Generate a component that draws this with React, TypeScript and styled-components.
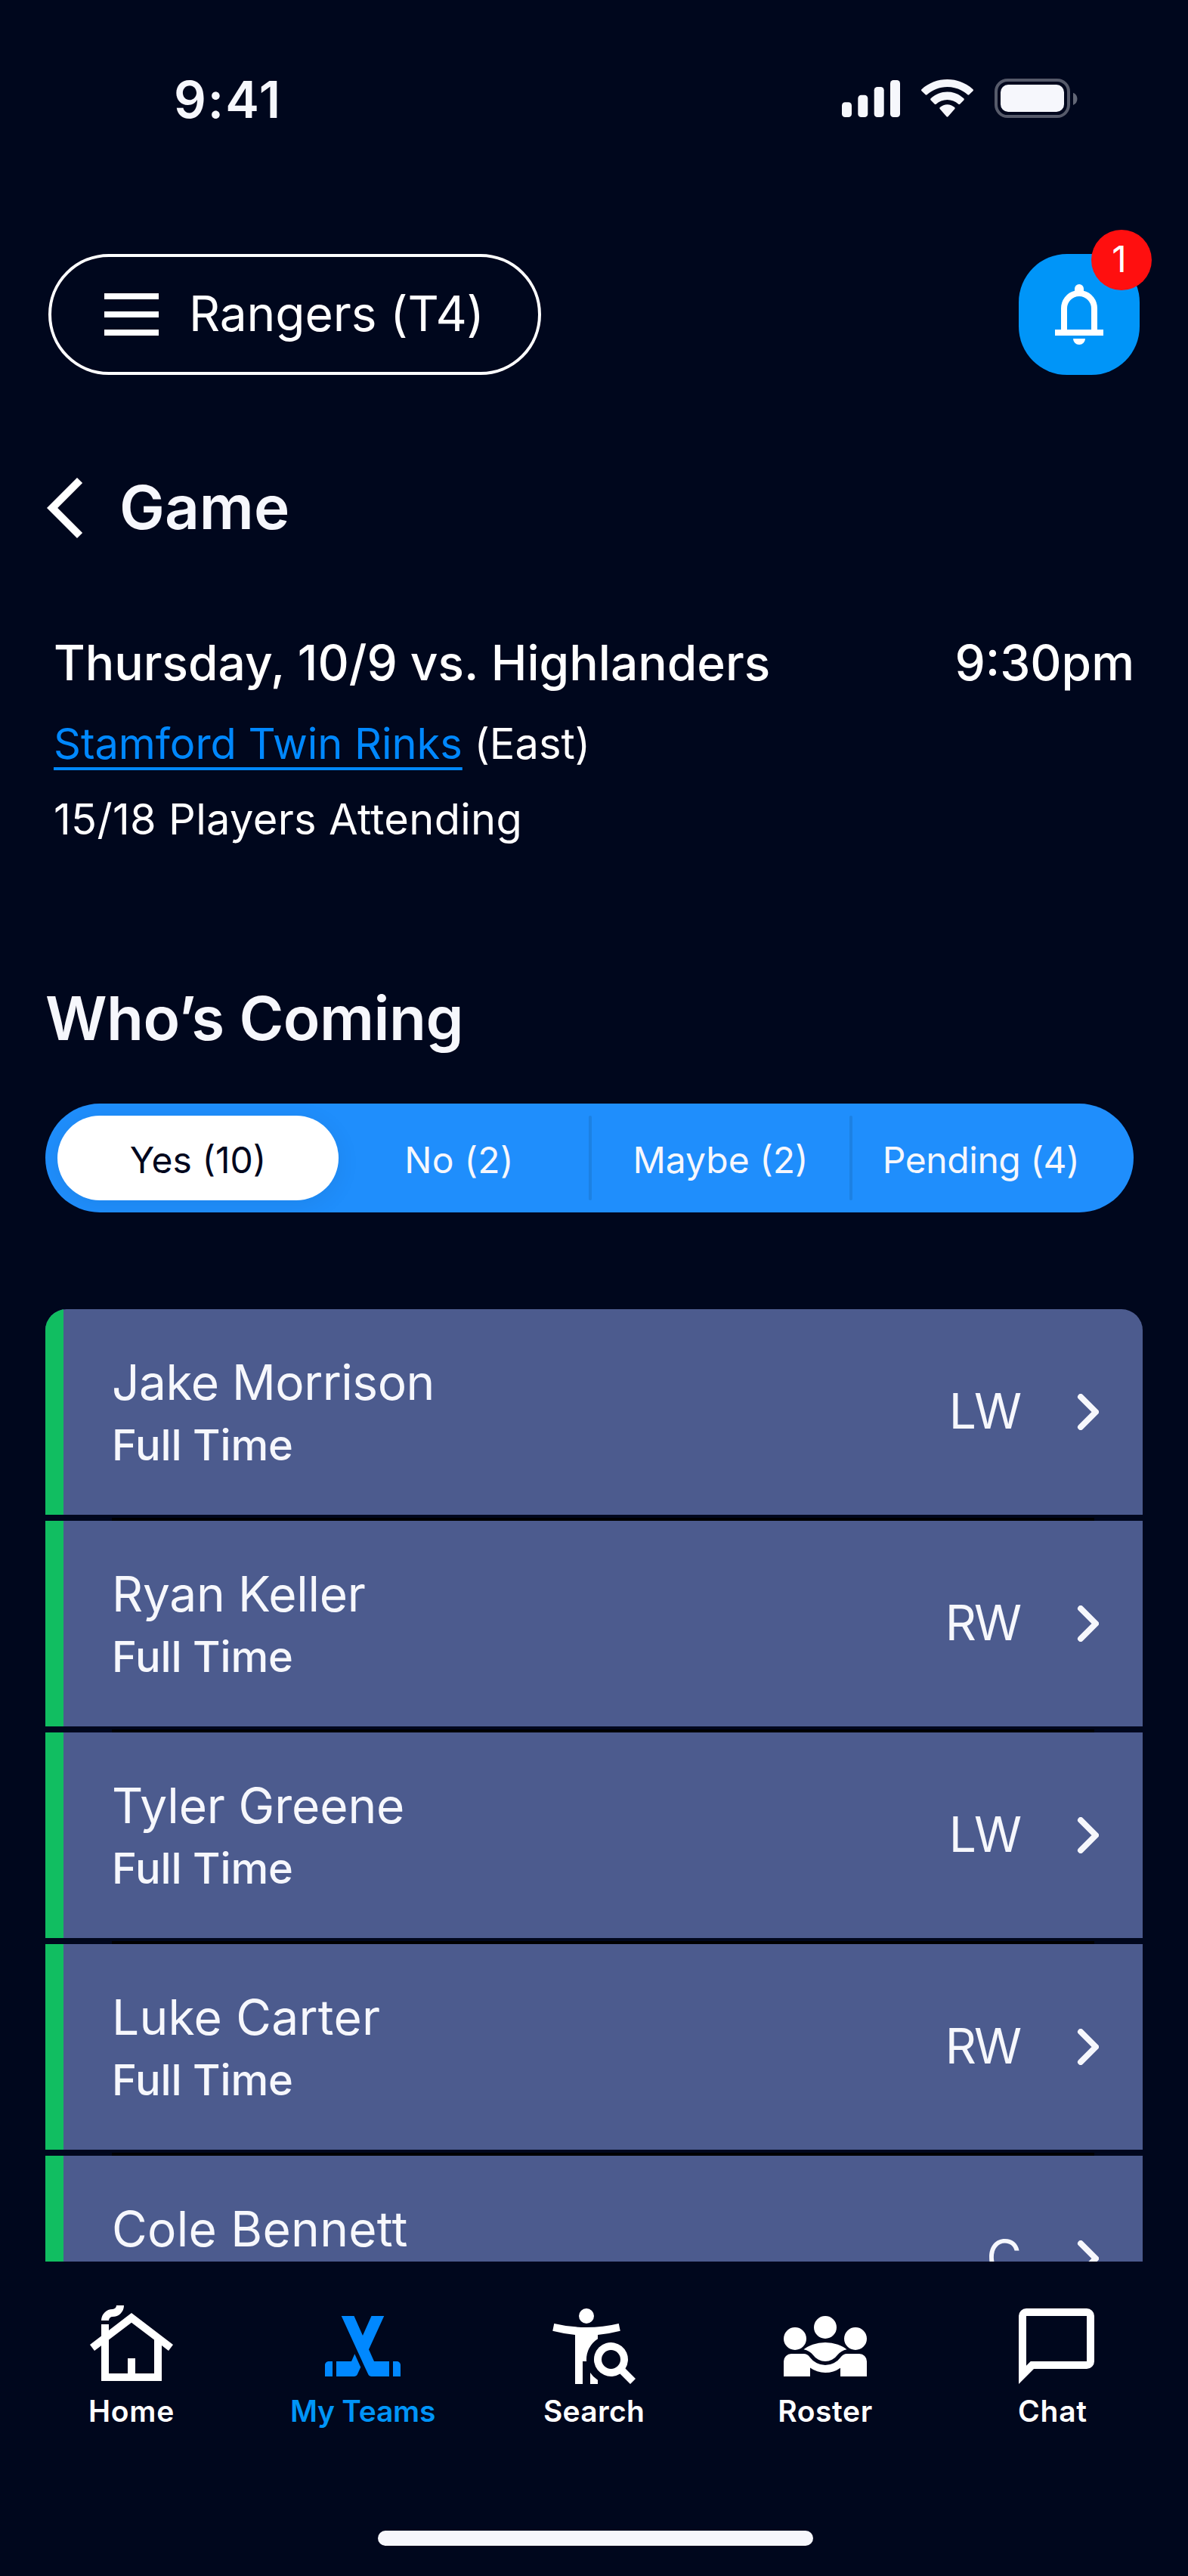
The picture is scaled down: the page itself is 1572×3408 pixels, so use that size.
import React from 'react';
import styled, { createGlobalStyle } from 'styled-components';

const c = {
  bg: '#00071d',
  text: '#f6f7fc',
  white: '#ffffff',
  blue: '#0088ff',
  accent: '#0095f8',
  segment: '#1f8efc',
  row: '#4c5b8e',
  green: '#11be61',
  red: '#ff0f0f',
};

const GlobalStyle = createGlobalStyle`
  *, *::before, *::after { box-sizing: border-box; }
  body {
    margin: 0;
    background: ${c.bg};
    font-family: Inter, 'Liberation Sans', sans-serif;
    color: ${c.white};
  }
  button, a { font: inherit; color: inherit; }
`;

const Screen = styled.main`
  display: flex;
  flex-direction: column;
  width: 1572px;
  height: 3408px;
  overflow: hidden;
  background: ${c.bg};
`;

const StatusBar = styled.div`
  display: flex;
  align-items: center;
  justify-content: space-between;
  height: 264px;
  padding: 0 146px 0 230px;
  color: ${c.text};
`;

const Clock = styled.time`
  font-size: 67px;
  font-weight: 600;
  line-height: 80px;
  letter-spacing: 2px;
`;

const StatusIcons = styled.div`
  display: flex;
  align-items: center;
  height: 52px;
  margin-top: -4px;
  gap: 28px;
`;

const Icon = styled.svg`
  display: block;
  flex: none;
  fill: currentColor;
`;

const TopBar = styled.header`
  display: flex;
  align-items: center;
  justify-content: space-between;
  padding: 72px 64px 0;
`;

const TeamPicker = styled.button`
  display: flex;
  align-items: center;
  gap: 40px;
  width: 652px;
  height: 160px;
  padding: 0 0 0 70px;
  border: 4px solid ${c.white};
  border-radius: 80px;
  background: transparent;
  font-size: 64px;
  font-weight: 400;
  line-height: 80px;
  letter-spacing: -0.1px;
`;

const TeamName = styled.span`
  padding-bottom: 2px;
`;

const Bars = styled.span`
  display: flex;
  flex-direction: column;
  gap: 16px;
  width: 72px;

  i {
    height: 8px;
    background: currentColor;
  }
`;

const BellButton = styled.button`
  position: relative;
  display: flex;
  align-items: center;
  justify-content: center;
  width: 160px;
  height: 160px;
  padding: 0;
  border: 0;
  border-radius: 64px;
  background: ${c.accent};
  color: ${c.white};
`;

const Badge = styled.span`
  position: absolute;
  top: -32px;
  right: -16px;
  width: 80px;
  height: 80px;
  padding-right: 6px;
  border-radius: 50%;
  background: ${c.red};
  font-size: 48px;
  font-weight: 400;
  line-height: 78px;
  text-align: center;
`;

const TitleRow = styled.div`
  display: flex;
  align-items: center;
  height: 96px;
  margin: 128px 0 0 62px;
`;

const Heading = styled.h1`
  margin: -3px 0 0;
  font-size: 80px;
  font-weight: 600;
  line-height: 96px;
  color: ${c.text};
`;

const GameInfo = styled.section`
  display: flex;
  flex-direction: column;
  gap: 32px;
  margin: 117px 71px 0;
`;

const Matchup = styled.div`
  display: flex;
  justify-content: space-between;
  margin-bottom: 1px;
  font-size: 64px;
  font-weight: 500;
  line-height: 80px;
`;

const Detail = styled.p<{ $tracking: number }>`
  margin: 0;
  font-size: 56px;
  font-weight: 400;
  line-height: 68px;
  letter-spacing: ${(p) => p.$tracking}px;
`;

const VenueLink = styled.a`
  color: ${c.blue};
  text-decoration: underline;
  text-decoration-thickness: 4px;
  text-underline-offset: 11px;
`;

const SectionHeading = styled(Heading).attrs({ as: 'h2' })`
  margin: 181px 0 0 60px;
  letter-spacing: -0.5px;
`;

const Segments = styled.div`
  display: grid;
  grid-template-columns: 372px 319px 28px 317px 28px 316px;
  flex: none;
  width: 1440px;
  height: 144px;
  margin: 65px 0 0 60px;
  padding: 16px;
  border-radius: 72px;
  background: ${c.segment};
  overflow: hidden;
`;

const Segment = styled.button<{ $active?: boolean; $tracking?: number }>`
  height: 112px;
  padding: 5px 0 0;
  border: 0;
  border-radius: 56px;
  background: ${(p) => (p.$active ? c.white : 'transparent')};
  box-shadow: ${(p) => (p.$active ? '0 6px 32px rgba(0, 0, 0, 0.07)' : 'none')};
  color: ${(p) => (p.$active ? c.bg : c.text)};
  font-size: 48px;
  font-weight: 400;
  line-height: 60px;
  letter-spacing: ${(p) => p.$tracking ?? 0}px;
  text-align: center;
  white-space: nowrap;
`;

const Divider = styled.span`
  justify-self: center;
  width: 4px;
  height: 112px;
  border-radius: 2px;
  background: #1c81e3;
`;

const PlayerList = styled.ul`
  display: flex;
  flex-direction: column;
  flex: none;
  width: 1452px;
  height: 1260px;
  margin: 128px 0 0 60px;
  padding: 0;
  list-style: none;
  overflow: hidden;
  border-radius: 28px 28px 0 0;
`;

const PlayerRow = styled.li`
  display: flex;
  flex: none;
  height: 272px;
  border-left: 24px solid ${c.green};
  background: ${c.row};
  color: ${c.text};
`;

const Separator = styled.li`
  flex: none;
  height: 4px;
  margin: 4px 64px 0 88px;
  background: #000;
`;

const PlayerText = styled.div`
  display: flex;
  flex-direction: column;
  flex: 1;
  gap: 9px;
  padding: 57px 0 0 64px;
`;

const PlayerName = styled.span<{ $tracking: number }>`
  font-size: 64px;
  font-weight: 400;
  line-height: 80px;
  letter-spacing: ${(p) => p.$tracking}px;
`;

const PlayerStatus = styled.span`
  font-size: 56px;
  font-weight: 500;
  line-height: 68px;
  letter-spacing: -0.17px;
`;

const Position = styled.span`
  align-self: center;
  margin: -3px 73px 0 0;
  font-size: 64px;
  font-weight: 400;
  line-height: 80px;
  letter-spacing: -3px;
`;

const RowChevron = styled(Icon)`
  align-self: center;
  margin-right: 58px;
`;

const TabBar = styled.nav`
  display: flex;
  flex: none;
  height: 356px;
  padding: 52px 21px 0;
`;

const Tab = styled.a<{ $active?: boolean }>`
  display: flex;
  flex-direction: column;
  align-items: center;
  width: 306px;
  color: ${(p) => (p.$active ? c.accent : c.white)};
  font-size: 39px;
  font-weight: 600;
  line-height: 52px;
`;

const TabIcon = styled(Icon)<{ $drop?: boolean; $active?: boolean }>`
  width: 120px;
  height: 120px;
  margin: ${(p) => (p.$drop ? '1px 0 -1px' : '0')};
  color: ${(p) => (p.$active ? c.blue : 'inherit')};
`;

const TabLabel = styled.span<{ $shift?: number; $tracking: number }>`
  padding-right: ${(p) => p.$shift ?? 0}px;
  letter-spacing: ${(p) => p.$tracking}px;
`;

const HomeIndicator = styled.div`
  flex: none;
  width: 576px;
  height: 20px;
  margin-left: 500px;
  border-radius: 10px;
  background: ${c.text};
`;

const players = [
  { name: 'Jake Morrison', status: 'Full Time', position: 'LW', tracking: -0.5 },
  { name: 'Ryan Keller', status: 'Full Time', position: 'RW', tracking: -0.3 },
  { name: 'Tyler Greene', status: 'Full Time', position: 'LW', tracking: -0.15 },
  { name: 'Luke Carter', status: 'Full Time', position: 'RW', tracking: 0.25 },
  { name: 'Cole Bennett', status: 'Full Time', position: 'C', tracking: 0.28 },
];

const tabs = [
  {
    label: 'Home',
    drop: true,
    tracking: 0.7,
    path: 'M4 21v-9.375L2.2 13L1 11.4L4 9.1V6h2v1.575L12 3l11 8.4l-1.2 1.575l-1.8-1.35V21zm2-2h5v-4h2v4h5v-8.9l-6-4.575L6 10.1zM4 5q0-1.25.875-2.125T7 2q.425 0 .713-.288T8 1h2q0 1.25-.875 2.125T7 4q-.425 0-.712.288T6 5z',
  },
  {
    label: 'My Teams',
    active: true,
    tracking: -0.25,
    path: 'M2 17v3h2v-4H3c-.55 0-1 .45-1 1zm7-1H5v4h4.69c.38 0 .72-.21.89-.55l.87-1.9-1.59-3.48L9 16zm12.71.29A.997.997 0 0 0 21 16h-1v4h2v-3c0-.28-.11-.53-.29-.71zM13.6 12.84 17.65 4H14.3l-1.76 3.97-.49 1.1-.05.14L9.7 4H6.35l4.05 8.84 1.52 3.32.01.02 1.52 3.27c.17.34.51.55.89.55H19v-4h-4l-1.4-3.16z',
  },
  {
    label: 'Search',
    tracking: 0.3,
    path: 'M10 6a2 2 0 1 1 0-4a2 2 0 0 1 0 4zM7 22V9Q4 8.7 1.05 7.95L1.45 6Q5.6 7 10 7T18.55 6L18.95 7.95Q16 8.7 13 9V10.03A6.5 6.5 0 0 0 10.02 16H9V22zM11 22V19A6.5 6.5 0 0 0 13 20.97V22zM21.6 22L18.9 19.3A4.5 4.5 0 1 1 20.3 17.9L23 20.6zM16.5 18a2.5 2.5 0 1 0 0-5a2.5 2.5 0 0 0 0 5z',
  },
  {
    label: 'Roster',
    tracking: 0.55,
    path: 'M1 20v-4q0-.85.588-1.425T3 14h3.275q.5 0 .95.25t.725.675q.725.975 1.788 1.525T12 17q1.225 0 2.288-.55t1.762-1.525q.325-.425.763-.675t.912-.25H21q.85 0 1.425.575T23 16v4h-7v-2.275q-.875.625-1.888.95T12 19q-1.075 0-2.1-.337T8 17.7V20zM12 16q-.95 0-1.8-.45t-1.4-1.225q-.425-.575-1.1-.95T6.3 12.85q.875-.8 2.4-1.325T12 11q1.75 0 3.3.525T17.7 12.85q-.75.15-1.4.525t-1.1.95Q14.65 15.1 13.8 15.55T12 16M4 13a3 3 0 1 1 0-6a3 3 0 0 1 0 6M20 13a3 3 0 1 1 0-6a3 3 0 0 1 0 6M12 10a3 3 0 1 1 0-6a3 3 0 0 1 0 6',
  },
  {
    label: 'Chat',
    shift: 10,
    tracking: 0.75,
    path: 'M2 22V4q0-.825.588-1.412T4 2h16q.825 0 1.413.588T22 4v12q0 .825-.587 1.413T20 18H6zm3.15-6H20V4H4v13.125z',
  },
];

function Signal() {
  return (
    <Icon width="77" height="49" viewBox="0 0 77 49">
      <rect x="0" y="29.3" width="13" height="19.7" rx="4.3" />
      <rect x="21.3" y="19.7" width="13" height="29.3" rx="4.3" />
      <rect x="42.7" y="9" width="13" height="40" rx="4.3" />
      <rect x="64" y="0" width="13" height="49" rx="4.3" />
    </Icon>
  );
}

function Wifi() {
  return (
    <Icon width="69" height="50" viewBox="0 0 17.15 12.4">
      <path d="M8.5713 2.46628C11.0584 2.46639 13.4504 3.38847 15.2529 5.04195C15.3887 5.1696 15.6056 5.16799 15.7393 5.03834L17.0368 3.77487C17.1045 3.70911 17.1422 3.62004 17.1417 3.52735C17.1411 3.43467 17.1023 3.34603 17.0338 3.28104C12.3028 -1.09368 4.83907 -1.09368 0.108056 3.28104C0.0395 3.34598 0.0006 3.4346 0 3.52728C-0.0006 3.61996 0.037 3.70906 0.104689 3.77487L1.40255 5.03834C1.53615 5.16819 1.75327 5.1698 1.88893 5.04195C3.69167 3.38836 6.08395 2.46628 8.5713 2.46628ZM8.56795 6.68656C9.92527 6.68647 11.2341 7.19821 12.2403 8.12234C12.3763 8.25347 12.5907 8.25063 12.7234 8.11594L14.0106 6.79685C14.0784 6.72765 14.116 6.63379 14.115 6.53625C14.114 6.43871 14.0746 6.34563 14.0054 6.27782C10.9416 3.38705 6.19688 3.38705 3.13305 6.27782C3.0638 6.34563 3.02435 6.43876 3.02345 6.53634C3.02254 6.63392 3.06028 6.72777 3.12822 6.79685L4.41513 8.11594C4.54778 8.25063 4.76215 8.25347 4.89823 8.12234C5.90368 7.19882 7.21152 6.68713 8.56795 6.68656ZM11.0924 9.48011C11.0943 9.58546 11.0572 9.68703 10.9899 9.76084L8.81327 12.2156C8.74946 12.2877 8.66247 12.3283 8.5717 12.3283C8.48093 12.3283 8.39394 12.2877 8.33013 12.2156L6.15321 9.76084C6.08585 9.68697 6.04886 9.58537 6.05096 9.48002C6.05306 9.37468 6.09407 9.27503 6.1643 9.2046C7.55427 7.8946 9.58912 7.8946 10.9791 9.2046C11.0493 9.27508 11.0903 9.37476 11.0924 9.48011Z" />
    </Icon>
  );
}

function Battery() {
  return (
    <Icon width="110" height="52" viewBox="0 0 110 52">
      <rect x="2" y="2" width="96" height="48" rx="15.2" fill="none" stroke="currentColor" strokeWidth="4" opacity="0.35" />
      <path d="M104 18.7v16.3a8.8 8.8 0 0 0 0-16.3z" opacity="0.4" />
      <rect x="8" y="8" width="84" height="36" rx="10" />
    </Icon>
  );
}

export default function App() {
  return (
    <>
      <GlobalStyle />
      <Screen>
        <StatusBar>
          <Clock>9:41</Clock>
          <StatusIcons>
            <Signal />
            <Wifi />
            <Battery />
          </StatusIcons>
        </StatusBar>

        <TopBar>
          <TeamPicker>
            <Bars>
              <i />
              <i />
              <i />
            </Bars>
            <TeamName>Rangers (T4)</TeamName>
          </TeamPicker>
          <BellButton aria-label="Notifications">
            <Icon width="96" height="96" viewBox="0 0 24 24">
              <path d="M4 19v-2h2v-7q0-2.075 1.25-3.687T10.5 4.2v-.7q0-.625.438-1.062T12 2t1.063.438T13.5 3.5v.7q2 .5 3.25 2.113T18 10v7h2v2zm8 3q-.825 0-1.412-.587T10 20h4q0 .825-.587 1.413T12 22m-4-5h8v-7q0-1.65-1.175-2.825T12 6T9.175 7.175T8 10z" />
            </Icon>
            <Badge>1</Badge>
          </BellButton>
        </TopBar>

        <TitleRow>
          <Icon width="96" height="96" viewBox="0 0 24 24">
            <path d="m10 22L0 12L10 2l1.775 1.775L3.55 12l8.225 8.225z" />
          </Icon>
          <Heading>Game</Heading>
        </TitleRow>

        <GameInfo>
          <Matchup>
            <span>Thursday, 10/9 vs. Highlanders</span>
            <span>9:30pm</span>
          </Matchup>
          <Detail $tracking={-0.05}>
            <VenueLink>Stamford Twin Rinks</VenueLink> (East)
          </Detail>
          <Detail $tracking={0.32}>15/18 Players Attending</Detail>
        </GameInfo>

        <SectionHeading>Who’s Coming</SectionHeading>
        <Segments>
          <Segment $active>Yes (10)</Segment>
          <Segment $tracking={0.3}>No (2)</Segment>
          <Divider />
          <Segment>Maybe (2)</Segment>
          <Divider />
          <Segment $tracking={-0.4}>Pending (4)</Segment>
        </Segments>

        <PlayerList>
          {players.map((p, i) => (
            <React.Fragment key={p.name}>
              {i > 0 && <Separator />}
              <PlayerRow>
                <PlayerText>
                  <PlayerName $tracking={p.tracking}>{p.name}</PlayerName>
                  <PlayerStatus>{p.status}</PlayerStatus>
                </PlayerText>
                <Position>{p.position}</Position>
                <RowChevron width="32" height="48" viewBox="0 0 32 48">
                  <path d="M8 4L28 24L8 44" fill="none" stroke="currentColor" strokeWidth="8" strokeLinecap="round" strokeLinejoin="round" />
                </RowChevron>
              </PlayerRow>
            </React.Fragment>
          ))}
        </PlayerList>

        <TabBar>
          {tabs.map((t) => (
            <Tab key={t.label} $active={t.active}>
              <TabIcon viewBox="0 0 24 24" $drop={t.drop} $active={t.active}>
                <path d={t.path} fillRule="evenodd" />
              </TabIcon>
              <TabLabel $shift={t.shift} $tracking={t.tracking}>
                {t.label}
              </TabLabel>
            </Tab>
          ))}
        </TabBar>
        <HomeIndicator />
      </Screen>
    </>
  );
}
